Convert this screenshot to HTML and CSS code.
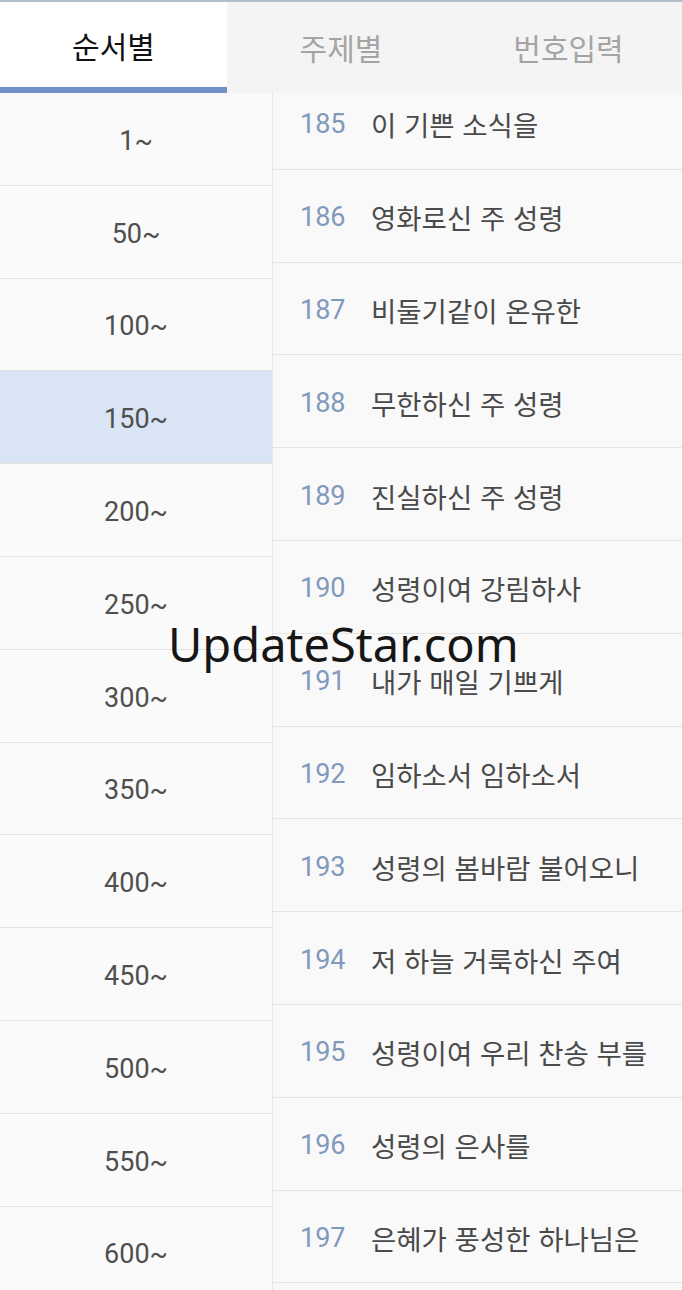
FILE: index.html
```html
<!DOCTYPE html>
<html lang="ko">
<head>
<meta charset="utf-8">
<title>찬송가</title>
<link rel="stylesheet" href="styles.css">
</head>
<body>
<div class="app">
  <nav class="tabs">
    <div class="tab active">순서별</div>
    <div class="tab">주제별</div>
    <div class="tab">번호입력</div>
  </nav>
  <main class="content">
    <ul class="ranges">
      <li class="range">1~</li>
      <li class="range">50~</li>
      <li class="range">100~</li>
      <li class="range selected">150~</li>
      <li class="range">200~</li>
      <li class="range">250~</li>
      <li class="range">300~</li>
      <li class="range">350~</li>
      <li class="range">400~</li>
      <li class="range">450~</li>
      <li class="range">500~</li>
      <li class="range">550~</li>
      <li class="range">600~</li>
    </ul>
    <ul class="songs">
      <li class="song"><span class="num">185</span><span class="title">이 기쁜 소식을</span></li>
      <li class="song"><span class="num">186</span><span class="title">영화로신 주 성령</span></li>
      <li class="song"><span class="num">187</span><span class="title">비둘기같이 온유한</span></li>
      <li class="song"><span class="num">188</span><span class="title">무한하신 주 성령</span></li>
      <li class="song"><span class="num">189</span><span class="title">진실하신 주 성령</span></li>
      <li class="song"><span class="num">190</span><span class="title">성령이여 강림하사</span></li>
      <li class="song"><span class="num">191</span><span class="title">내가 매일 기쁘게</span></li>
      <li class="song"><span class="num">192</span><span class="title">임하소서 임하소서</span></li>
      <li class="song"><span class="num">193</span><span class="title">성령의 봄바람 불어오니</span></li>
      <li class="song"><span class="num">194</span><span class="title">저 하늘 거룩하신 주여</span></li>
      <li class="song"><span class="num">195</span><span class="title">성령이여 우리 찬송 부를</span></li>
      <li class="song"><span class="num">196</span><span class="title">성령의 은사를</span></li>
      <li class="song"><span class="num">197</span><span class="title">은혜가 풍성한 하나님은</span></li>
      <li class="song empty"></li>
    </ul>
  </main>
  <div class="watermark">UpdateStar.com</div>
</div>
</body>
</html>
```

FILE: styles.css
```css
* { box-sizing: border-box; }
html, body { margin: 0; padding: 0; }
body {
  width: 682px;
  height: 1290px;
  overflow: hidden;
  background: #f9f9f9;
  font-family: "Noto Sans CJK KR", "Noto Sans", sans-serif;
}
.app {
  position: relative;
  width: 682px;
  height: 1290px;
  overflow: hidden;
}
.tabs {
  display: grid;
  grid-template-columns: 227px 228px 227px;
  height: 93px;
  border-top: 2px solid #b4bfcc;
  background: #f4f4f4;
}
.tab {
  display: flex;
  align-items: center;
  justify-content: center;
  font-size: 30px;
  color: #a4a4a4;
  padding-bottom: 2px;
}
.tab.active {
  background: #ffffff;
  color: #111111;
  border-bottom: 6px solid #7090c8;
  padding-bottom: 0;
}
.content {
  display: flex;
  height: 1197px;
  overflow: hidden;
}
.ranges {
  list-style: none;
  margin: 0;
  padding: 0;
  width: 273px;
  flex: none;
  background: #fafafa;
  border-right: 1px solid #e6e6e6;
}
.range {
  height: 92.8px;
  display: flex;
  align-items: center;
  justify-content: center;
  padding-top: 4px;
  border-bottom: 1px solid #e2e2e2;
  font-family: "Roboto", "Noto Sans", sans-serif;
  font-size: 27px;
  color: #4f4f4f;
}
.range.selected {
  background: #d9e5f4;
}
.songs {
  list-style: none;
  margin: -16px 0 0 0;
  padding: 0;
  flex: 1;
  background: #f9f9f9;
}
.song {
  height: 92.8px;
  display: flex;
  align-items: center;
  padding-left: 27px;
  padding-top: 3px;
  border-bottom: 1px solid #e4e4e4;
}
.num {
  width: 71px;
  flex: none;
  font-family: "Roboto", "Noto Sans", sans-serif;
  font-size: 27px;
  color: #8199bc;
}
.title {
  font-size: 27.5px;
  color: #4a4a4a;
  white-space: nowrap;
}
.watermark {
  position: absolute;
  left: 168px;
  top: 616px;
  font-family: "Noto Sans", "Open Sans", sans-serif;
  font-size: 47px;
  color: #161616;
  line-height: 1.2;
}
```
